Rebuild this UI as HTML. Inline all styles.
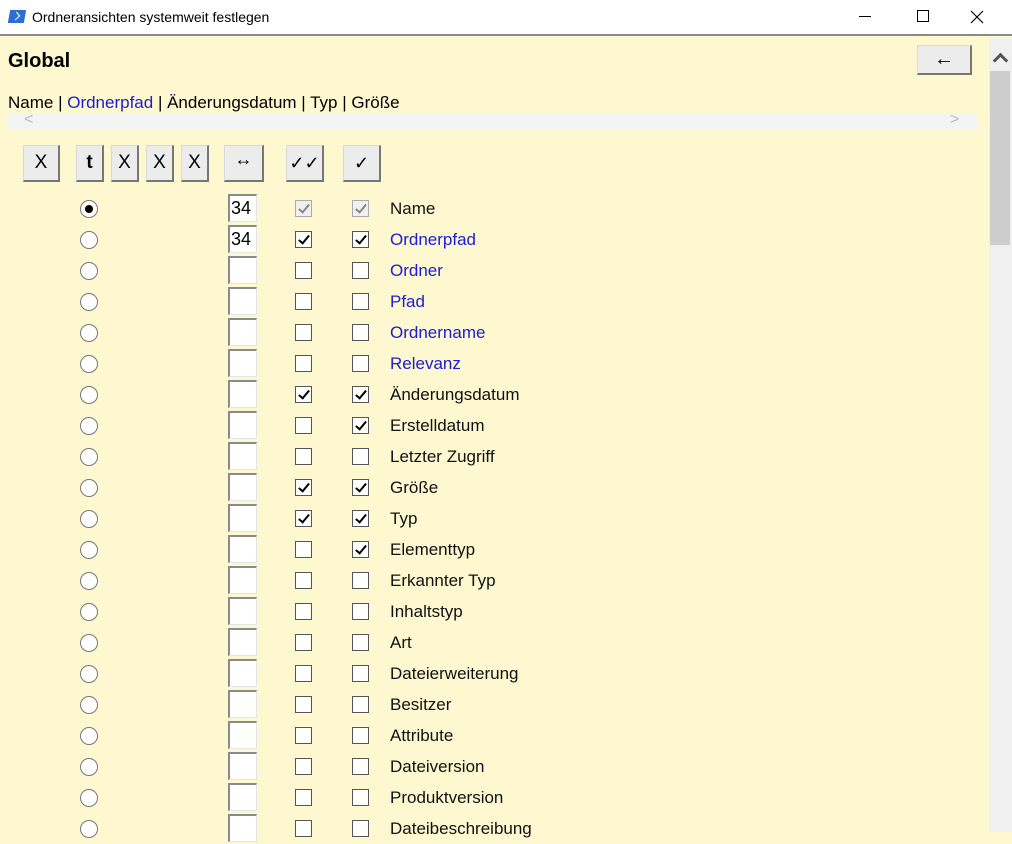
<!DOCTYPE html>
<html><head><meta charset="utf-8"><style>
*{box-sizing:border-box;margin:0;padding:0}
body{width:1012px;height:832px;overflow:hidden;background:#fdf8cf;font-family:"Liberation Sans",sans-serif;position:relative}
.tb{position:absolute;left:0;top:0;width:1012px;height:36px;background:#fff;border-bottom:2px solid #8a8a8a}
.tb .t{position:absolute;left:32px;top:9px;font-size:14px;color:#000}
.ico{position:absolute;left:9px;top:10px;width:16px;height:13px;background:#2b6fd6;transform:skewX(-10deg)}
.ico:after{content:"";position:absolute;left:4px;top:3px;width:5px;height:5px;border-right:1.5px solid #fff;border-bottom:1.5px solid #fff;transform:rotate(-45deg)}
.abs{position:absolute}
.btn{position:absolute;top:145px;height:37px;background:#ececec;border:1px solid #d8d8d8;border-right:2px solid #777;border-bottom:2px solid #777;font-size:19px;text-align:center;line-height:34px;color:#000}
.row{position:absolute;left:0;width:985px;height:31px}
.rad{position:absolute;left:80px;top:7px;width:18px;height:18px;border:1px solid #777;border-radius:50%;background:#fff}
.rad.on:after{content:"";position:absolute;left:4px;top:4px;width:8px;height:8px;border-radius:50%;background:#000}
.txt{position:absolute;left:228px;top:1px;width:29px;height:28px;background:#fff;border-top:2px solid #8a8a8a;border-left:2px solid #8a8a8a;border-right:1px solid #e4e4e4;border-bottom:1px solid #e4e4e4;font-size:18px;padding-left:1px;line-height:24px}
.cb{position:absolute;top:7px;width:17px;height:17px;border:1px solid #555;background:#fff}
.c1{left:295px}.c2{left:352px}
.cb.k:after{content:"";position:absolute;left:5px;top:1px;width:4px;height:9px;border-right:2.5px solid #000;border-bottom:2.5px solid #000;transform:rotate(40deg)}
.cb.g{background:#f0f0f0;border-color:#aaa}
.cb.g:after{content:"";position:absolute;left:5px;top:1px;width:4px;height:9px;border-right:2px solid #888;border-bottom:2px solid #888;transform:rotate(40deg)}
.lb{position:absolute;left:390px;top:6px;font-size:17px;color:#111}
.b{color:#1c1cd0}
</style></head><body>
<div class="tb"><div class="ico"></div><div class="t">Ordneransichten systemweit festlegen</div>
<div class="abs" style="left:859px;top:16px;width:12px;height:1px;background:#000"></div>
<div class="abs" style="left:917px;top:10px;width:12px;height:12px;border:1px solid #000"></div>
<svg class="abs" style="left:970px;top:10px" width="14" height="14"><path d="M1 1L13 13M13 1L1 13" stroke="#000" stroke-width="1.2"/></svg>
</div>
<div class="abs" style="left:8px;top:50px;font-size:20px;font-weight:bold">Global</div>
<div class="btn" style="left:917px;top:45px;width:55px;height:30px;line-height:26px;font-size:20px">←</div>
<div class="abs" style="left:989px;top:38px;width:23px;height:794px;background:#f0f0f0"></div>
<div class="abs" style="left:990px;top:71px;width:20px;height:174px;background:#cdcdcd"></div>
<div class="abs" style="width:11px;height:11px;border-left:3px solid #555;border-top:3px solid #555;transform:rotate(45deg);left:995px;top:55px"></div>
<div class="abs" style="left:8px;top:93px;font-size:17px">Name | <span class="b">Ordnerpfad</span> | Änderungsdatum | Typ | Größe</div>
<div class="abs" style="left:8px;top:113px;width:969px;height:16px;background:#f4f4f4"></div>
<div class="abs" style="left:24px;top:111px;color:#bbb;font-size:16px">&lt;</div>
<div class="abs" style="left:950px;top:111px;color:#bbb;font-size:16px">&gt;</div>
<div class="btn" style="left:23px;width:37px">X</div>
<div class="btn" style="left:76px;width:28px;font-weight:bold">t</div>
<div class="btn" style="left:111px;width:28px">X</div>
<div class="btn" style="left:146px;width:28px">X</div>
<div class="btn" style="left:181px;width:28px">X</div>
<div class="btn" style="left:224px;width:40px;line-height:26px;font-size:18px">↔</div>
<div class="btn" style="left:286px;width:38px;font-size:18px">✓✓</div>
<div class="btn" style="left:343px;width:38px;font-size:18px">✓</div>

<div class="row" style="top:193px"><div class="rad on"></div><div class="txt">34</div><div class="cb c1 g"></div><div class="cb c2 g"></div><div class="lb">Name</div></div>
<div class="row" style="top:224px"><div class="rad"></div><div class="txt">34</div><div class="cb c1 k"></div><div class="cb c2 k"></div><div class="lb b">Ordnerpfad</div></div>
<div class="row" style="top:255px"><div class="rad"></div><div class="txt"></div><div class="cb c1"></div><div class="cb c2"></div><div class="lb b">Ordner</div></div>
<div class="row" style="top:286px"><div class="rad"></div><div class="txt"></div><div class="cb c1"></div><div class="cb c2"></div><div class="lb b">Pfad</div></div>
<div class="row" style="top:317px"><div class="rad"></div><div class="txt"></div><div class="cb c1"></div><div class="cb c2"></div><div class="lb b">Ordnername</div></div>
<div class="row" style="top:348px"><div class="rad"></div><div class="txt"></div><div class="cb c1"></div><div class="cb c2"></div><div class="lb b">Relevanz</div></div>
<div class="row" style="top:379px"><div class="rad"></div><div class="txt"></div><div class="cb c1 k"></div><div class="cb c2 k"></div><div class="lb">Änderungsdatum</div></div>
<div class="row" style="top:410px"><div class="rad"></div><div class="txt"></div><div class="cb c1"></div><div class="cb c2 k"></div><div class="lb">Erstelldatum</div></div>
<div class="row" style="top:441px"><div class="rad"></div><div class="txt"></div><div class="cb c1"></div><div class="cb c2"></div><div class="lb">Letzter Zugriff</div></div>
<div class="row" style="top:472px"><div class="rad"></div><div class="txt"></div><div class="cb c1 k"></div><div class="cb c2 k"></div><div class="lb">Größe</div></div>
<div class="row" style="top:503px"><div class="rad"></div><div class="txt"></div><div class="cb c1 k"></div><div class="cb c2 k"></div><div class="lb">Typ</div></div>
<div class="row" style="top:534px"><div class="rad"></div><div class="txt"></div><div class="cb c1"></div><div class="cb c2 k"></div><div class="lb">Elementtyp</div></div>
<div class="row" style="top:565px"><div class="rad"></div><div class="txt"></div><div class="cb c1"></div><div class="cb c2"></div><div class="lb">Erkannter Typ</div></div>
<div class="row" style="top:596px"><div class="rad"></div><div class="txt"></div><div class="cb c1"></div><div class="cb c2"></div><div class="lb">Inhaltstyp</div></div>
<div class="row" style="top:627px"><div class="rad"></div><div class="txt"></div><div class="cb c1"></div><div class="cb c2"></div><div class="lb">Art</div></div>
<div class="row" style="top:658px"><div class="rad"></div><div class="txt"></div><div class="cb c1"></div><div class="cb c2"></div><div class="lb">Dateierweiterung</div></div>
<div class="row" style="top:689px"><div class="rad"></div><div class="txt"></div><div class="cb c1"></div><div class="cb c2"></div><div class="lb">Besitzer</div></div>
<div class="row" style="top:720px"><div class="rad"></div><div class="txt"></div><div class="cb c1"></div><div class="cb c2"></div><div class="lb">Attribute</div></div>
<div class="row" style="top:751px"><div class="rad"></div><div class="txt"></div><div class="cb c1"></div><div class="cb c2"></div><div class="lb">Dateiversion</div></div>
<div class="row" style="top:782px"><div class="rad"></div><div class="txt"></div><div class="cb c1"></div><div class="cb c2"></div><div class="lb">Produktversion</div></div>
<div class="row" style="top:813px"><div class="rad"></div><div class="txt"></div><div class="cb c1"></div><div class="cb c2"></div><div class="lb">Dateibeschreibung</div></div>
</body></html>
